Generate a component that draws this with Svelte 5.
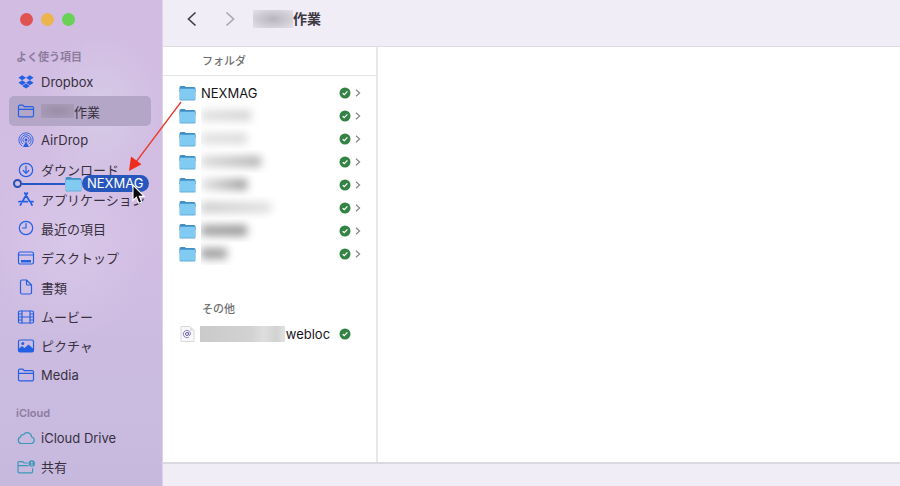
<script>
  const favorites = [
    { icon: 'dropbox', label: 'Dropbox' },
    { icon: 'folder', label: '作業', masked: true, active: true },
    { icon: 'airdrop', label: 'AirDrop' },
    { icon: 'download', label: 'ダウンロード' },
    { icon: 'apps', label: 'アプリケーション' },
    { icon: 'clock', label: '最近の項目' },
    { icon: 'desktop', label: 'デスクトップ' },
    { icon: 'doc', label: '書類' },
    { icon: 'film', label: 'ムービー' },
    { icon: 'picture', label: 'ピクチャ' },
    { icon: 'folder', label: 'Media' }
  ];
  const cloud = [
    { icon: 'cloud', label: 'iCloud Drive' },
    { icon: 'shared', label: '共有' }
  ];
  // Hidden names: width of the blot and how dark it is at either end
  const folders = [
    { name: 'NEXMAG' },
    { width: 50, from: 0.12, to: 0.17 },
    { width: 46, from: 0.12, to: 0.14 },
    { width: 60, from: 0.14, to: 0.3 },
    { width: 46, from: 0.1, to: 0.4 },
    { width: 70, from: 0.2, to: 0.12 },
    { width: 46, from: 0.36, to: 0.4 },
    { width: 26, from: 0.38, to: 0.36 }
  ];
</script>

{#snippet glyph(name)}
  <svg class="glyph" class:teal={name === 'cloud' || name === 'shared'} viewBox="0 0 18 18" aria-hidden="true">
    {#if name === 'dropbox'}
      <path class="solid" d="M5.200 2.300 9 4.800 5.200 7.300 1.400 4.800zM12.800 2.300l3.800 2.500-3.800 2.500L9 4.800zM1.400 9.800l3.800-2.500L9 9.800l-3.800 2.500zM12.800 7.300l3.800 2.500-3.800 2.500L9 9.800zM5.200 13.100 9 10.600l3.800 2.500L9 15.600z" />
    {:else if name === 'folder'}
      <path d="M1.500 13.500v-9A1.300 1.300 0 0 1 2.800 3.200h3l1.700 1.500h7.700a1.300 1.300 0 0 1 1.300 1.300v7.500a1.300 1.300 0 0 1-1.300 1.300H2.800a1.300 1.300 0 0 1-1.300-1.300zM1.500 7.300h15" />
    {:else if name === 'airdrop'}
      <path class="thin" d="M5 15A7.200 7.200 0 1 1 13 15M5.600 12.900a5.200 5.200 0 1 1 6.800 0M6.900 11.200a3.200 3.200 0 1 1 4.200 0" />
      <circle class="solid" cx="9" cy="9" r="1.400" />
      <path class="solid" d="M9 10.500 12 16H6z" />
    {:else if name === 'download'}
      <circle cx="9" cy="9" r="6.700" />
      <path d="M9 5v7.200M6.200 9.500 9 12.300l2.800-2.800" />
    {:else if name === 'apps'}
      <path class="bold" d="m10.300 3-5 8.700M7.800 3l4.500 7.700M14 13.300l1 1.700M4.200 13.600l-.8 1.400M2 11.700h8.300M13 11.700h3" />
    {:else if name === 'clock'}
      <circle cx="9" cy="9" r="6.700" />
      <path d="M9 4.500V9H5.500" />
    {:else if name === 'desktop'}
      <rect x="1.500" y="3" width="15" height="12" rx="1.800" />
      <path d="M1.500 6h15" />
      <path class="solid" d="M4 11h10v2.500H4z" />
    {:else if name === 'doc'}
      <path d="M3.500 3.500A1.500 1.500 0 0 1 5 2h4.500l5 5v7.500A1.500 1.500 0 0 1 13 16H5a1.500 1.500 0 0 1-1.500-1.500zM9.500 2v4A1 1 0 0 0 10.500 7h4" />
    {:else if name === 'film'}
      <rect x="1.500" y="3" width="15" height="12" rx="1.200" />
      <path d="M5 3v12M13 3v12M5 9h8M1.500 6H5M1.500 9H5M1.500 12H5M13 6h3.500M13 9h3.500M13 12h3.500" />
    {:else if name === 'picture'}
      <rect x="1.500" y="3" width="15" height="12" rx="1.500" />
      <path class="solid" d="m1.500 12 3.500-3 2.500 2L11.500 7.500l5 4.500v2a1 1 0 0 1-1 1h-13a1 1 0 0 1-1-1z" />
      <circle class="solid" cx="5.800" cy="6.600" r="1.500" />
    {:else if name === 'cloud'}
      <path d="M4.500 14.500a3.400 3.400 0 0 1-.9-6.600 2.500 2.500 0 0 1 3-2.300 4.400 4.400 0 0 1 8 2.400 3.300 3.300 0 0 1-.3 6.500z" />
    {:else}
      <path d="M10.500 5H7.200L5.700 3.600H2A1 1 0 0 0 1 4.600V13.500a1.300 1.300 0 0 0 1.300 1.300h12a1.300 1.300 0 0 0 1.300-1.300V10.500M1 7.600h10" />
      <circle class="solid" cx="14.800" cy="5.500" r="3.200" />
      <circle cx="14.800" cy="4.700" r=".9" fill="#d0c0e2" stroke="none" />
      <path d="M13.200 7.400a1.700 1.300 0 0 1 3.200 0z" fill="#d0c0e2" stroke="none" />
    {/if}
  </svg>
{/snippet}

{#snippet folderIcon()}
  <svg class="folder" viewBox="0 0 16 16" aria-hidden="true">
    <path d="M0 2.500Q0 1 1.500 1H5l1.500 1h8Q16 2 16 3.500V7H0z" fill="#3f8fc4" />
    <rect y="3.500" width="16" height="12" rx="1" fill="#62aedb" />
    <rect x=".5" y="4" width="15" height="10.500" rx=".6" fill="#81caf2" />
  </svg>
{/snippet}

{#snippet synced()}
  <svg class="synced" viewBox="0 0 12 12" role="img" aria-label="同期済み">
    <circle cx="6" cy="6" r="5.500" fill="#338344" />
    <path d="m3.700 6.200 1.600 1.500 3.100-3.300" fill="none" stroke="#fff" stroke-width="1.300" />
  </svg>
{/snippet}

{#snippet navList(items)}
  <ul>
    {#each items as item}
      <li>
        <a href="#{item.icon}" class:active={item.active}>
          {@render glyph(item.icon)}
          {#if item.masked}<span class="mask small"></span>{/if}<span>{item.label}</span>
        </a>
      </li>
    {/each}
  </ul>
{/snippet}

<div class="window">
  <aside>
    <div class="lights">
      <button class="red" aria-label="閉じる"></button>
      <button class="amber" aria-label="しまう"></button>
      <button class="green" aria-label="拡大"></button>
    </div>
    <nav>
      <h2>よく使う項目</h2>
      {@render navList(favorites)}
      <h2 class="next">iCloud</h2>
      {@render navList(cloud)}
    </nav>
  </aside>

  <main>
    <header>
      <button class="arrow" aria-label="戻る">
        <svg viewBox="0 0 10 16"><path d="M8.500 1.500 1.500 8l7 6.500" /></svg>
      </button>
      <button class="arrow dim" aria-label="進む">
        <svg viewBox="0 0 10 16"><path d="m1.500 1.500 7 6.500-7 6.500" /></svg>
      </button>
      <h1><span class="mask"></span>作業</h1>
    </header>

    <div class="columns">
      <section>
        <h3>フォルダ</h3>
        <ul class="files">
          {#each folders as folder}
            <li>
              <button class="file" aria-label={folder.name ?? 'フォルダ'}>
                {@render folderIcon()}
                <span class="name">
                  {#if folder.name}
                    {folder.name}
                  {:else}
                    <span class="clip"><span class="blot" style="width: {folder.width}px; --from: {folder.from}; --to: {folder.to}"></span></span>
                  {/if}
                </span>
                {@render synced()}
                <svg class="chevron" viewBox="0 0 6 8"><path d="m1 .8 3.600 3.200L1 7.200" /></svg>
              </button>
            </li>
          {/each}
        </ul>
        <h4>その他</h4>
        <button class="file">
          <svg class="folder" viewBox="0 0 16 16" aria-hidden="true">
            <path d="M1.500.5h9l4 4v11h-13z" fill="#f8f7fa" stroke="#d9d8dd" />
            <path d="M10.500.5v4h4z" fill="#dedde2" />
            <circle cx="7.500" cy="8" r="1.500" fill="none" stroke="#6b5fa6" />
            <path d="M9 6.400v2.200q.3 1.200 1.500.6.700-1 .3-2.400a3.600 3.600 0 1 0-1.300 4.200" fill="none" stroke="#6b5fa6" stroke-width=".8" />
          </svg>
          <span class="name"><span class="mask long"></span>.webloc</span>
          {@render synced()}
          <span class="chevron"></span>
        </button>
      </section>
      <div class="preview"></div>
    </div>
    <footer></footer>
  </main>

  <svg class="pointer-line" viewBox="0 0 60 74" aria-hidden="true">
    <path d="M54 1 9 61" stroke="#e93a2c" stroke-width="1.300" />
    <path d="m2 70 2-14.500 10.500 7.800z" fill="#ee2d1c" />
  </svg>

  <div class="drag">
    <span class="ring"></span>
    <span class="line"></span>
    {@render folderIcon()}
    <span class="pill">NEXMAG</span>
  </div>

  <svg class="cursor" viewBox="0 0 14 20" aria-hidden="true">
    <path d="M1 1v15.500l3.400-3.200 2.300 5.900 3-1.300-2.400-5.500h4.900z" fill="#0b0b0f" stroke="#fff" stroke-width="1.100" />
  </svg>
</div>

<style>
  :global(body) {
    margin: 0;
  }
  .window {
    position: relative;
    display: grid;
    grid-template-columns: 162px 1fr;
    height: 100vh;
    overflow: hidden;
    font-family: Inter, "Noto Sans CJK JP", sans-serif;
    font-size: 13px;
    color: #232028;
  }
  h1, h2, h3, h4, ul {
    margin: 0;
    padding: 0;
    list-style: none;
  }
  button {
    padding: 0;
    border: 0;
    background: none;
    color: inherit;
    font: inherit;
  }

  aside {
    overflow: hidden;
    background:
      radial-gradient(ellipse 64px 80px at 100px 110px, #d6cae7, transparent),
      radial-gradient(ellipse 80px 100px at 70px 240px, #d8c7e8, transparent),
      linear-gradient(#d2bce2, #d2bde3 50%, #cbbbe0 75%, #c7b9de);
  }
  .lights {
    display: flex;
    gap: 8px;
    padding: 13px 20px 0;
  }
  .lights button {
    width: 13px;
    height: 13px;
    border-radius: 50%;
  }
  .red { background: #e15352; }
  .amber { background: #ecb44c; }
  .green { background: #67d254; }
  nav {
    padding: 23px 11px 0 9px;
  }
  h2 {
    padding-left: 7px;
    font-size: 11px;
    line-height: 16px;
    font-weight: 600;
    color: #8d7c9e;
  }
  nav ul {
    display: grid;
    grid-auto-rows: 1fr;
  }
  h2 + ul {
    height: 323px;
    margin-top: 2px;
  }
  h2.next {
    margin-top: 15px;
  }
  h2.next + ul {
    height: 58px;
  }
  nav a {
    display: flex;
    align-items: center;
    box-sizing: border-box;
    height: 100%;
    padding-left: 8px;
    border-radius: 5px;
    color: #37303f;
    white-space: nowrap;
    text-decoration: none;
  }
  nav a.active {
    background: #b4a6c7;
  }
  .glyph {
    width: 18px;
    height: 18px;
    margin-right: 6px;
    flex: none;
    fill: none;
    stroke: #2460e4;
    stroke-width: 1.2;
    stroke-linejoin: round;
    stroke-linecap: round;
  }
  .glyph .solid { fill: #2460e4; stroke: none; }
  .glyph .thin { stroke-width: 0.9; }
  .glyph .bold { stroke-width: 1.8; }
  .glyph.teal { stroke: #3f98b8; }
  .glyph.teal .solid { fill: #3f98b8; }

  main {
    display: flex;
    flex-direction: column;
    min-width: 0;
    border-left: 1px solid #dcd5e4;
  }
  header {
    display: flex;
    align-items: center;
    box-sizing: border-box;
    height: 47px;
    padding: 0 24px 8px;
    background: #f0edf6;
    border-bottom: 1px solid #dedbe3;
  }
  .arrow {
    display: flex;
    width: 10px;
    height: 16px;
    margin-right: 28px;
  }
  .arrow svg {
    width: 10px;
    fill: none;
    stroke: #444149;
    stroke-width: 1.7;
  }
  .arrow.dim svg { stroke: #aaa7b0; }
  .arrow.dim { margin-right: 18px; }
  h1 {
    display: flex;
    align-items: center;
    font-size: 14px;
    line-height: 20px;
    font-weight: 700;
    color: #3c3943;
  }
  .mask {
    flex: none;
    width: 40px;
    height: 18px;
    background: radial-gradient(ellipse at 50% 50%, #b7b5bd, #cfccd4 55%, #e4e1ea);
  }
  .mask.small {
    width: 33px;
    height: 14px;
    background: radial-gradient(ellipse at 50% 50%, #998fa8, #aa9dbb);
  }
  .mask.long {
    position: relative;
    width: 85px;
    height: 16px;
    margin: 0 -3px 0 -1px;
    background: linear-gradient(90deg, #cacaca, #d2d2d2 60%, #dedede 75%, #d2d2d2 90%, #e2e2e2);
  }
  .columns {
    flex: 1;
    display: grid;
    grid-template-columns: 215px 1fr;
    min-height: 0;
    background: #fff;
  }
  section {
    border-right: 2px solid #e8e8e8;
  }
  h3 {
    padding-left: 39px;
    border-bottom: 1px solid #e3e3e3;
    font-size: 11px;
    line-height: 28px;
    font-weight: 500;
    color: #6f6f72;
  }
  .files {
    padding-top: 5px;
  }
  .file {
    display: flex;
    align-items: center;
    width: 100%;
    height: 23px;
    padding: 0 15px 0 16px;
    text-align: left;
    color: #17151b;
  }
  .folder {
    width: 17px;
    height: 16px;
    flex: none;
  }
  .name {
    display: flex;
    align-items: center;
    flex: 1;
    min-width: 0;
    margin-left: 5px;
  }
  .clip {
    flex: 1;
    overflow: hidden;
  }
  .blot {
    display: block;
    height: 11px;
    margin: 6px 0;
    background: linear-gradient(90deg, rgb(0 0 0 / var(--from)), rgb(0 0 0 / var(--to)));
    filter: blur(4px);
  }
  .synced {
    width: 12px;
    height: 12px;
    flex: none;
  }
  .chevron {
    width: 6px;
    height: 8px;
    margin-left: 4px;
    flex: none;
    fill: none;
    stroke: #85858a;
    stroke-width: 1.2;
  }
  h4 {
    margin: 36px 0 5px 39px;
    font-size: 11px;
    line-height: 16px;
    font-weight: 500;
    color: #6f6f72;
  }
  footer {
    height: 22px;
    border-top: 2px solid #dad7e0;
    background: #f0edf6;
  }

  .pointer-line {
    position: absolute;
    left: 127px;
    top: 101px;
    width: 60px;
    height: 74px;
    fill: none;
  }
  .drag {
    position: absolute;
    left: 13px;
    top: 175px;
    display: flex;
    align-items: center;
    height: 17px;
  }
  .ring {
    box-sizing: border-box;
    width: 9px;
    height: 9px;
    border: 2px solid #2450b4;
    border-radius: 50%;
  }
  .line {
    width: 43px;
    height: 2px;
    background: #2457c4;
  }
  .pill {
    padding: 0 6px 0 5px;
    border-radius: 9px;
    background: #2757bd;
    color: #fff;
    line-height: 17px;
  }
  .cursor {
    position: absolute;
    left: 132px;
    top: 184px;
    width: 14px;
    height: 20px;
  }
</style>
